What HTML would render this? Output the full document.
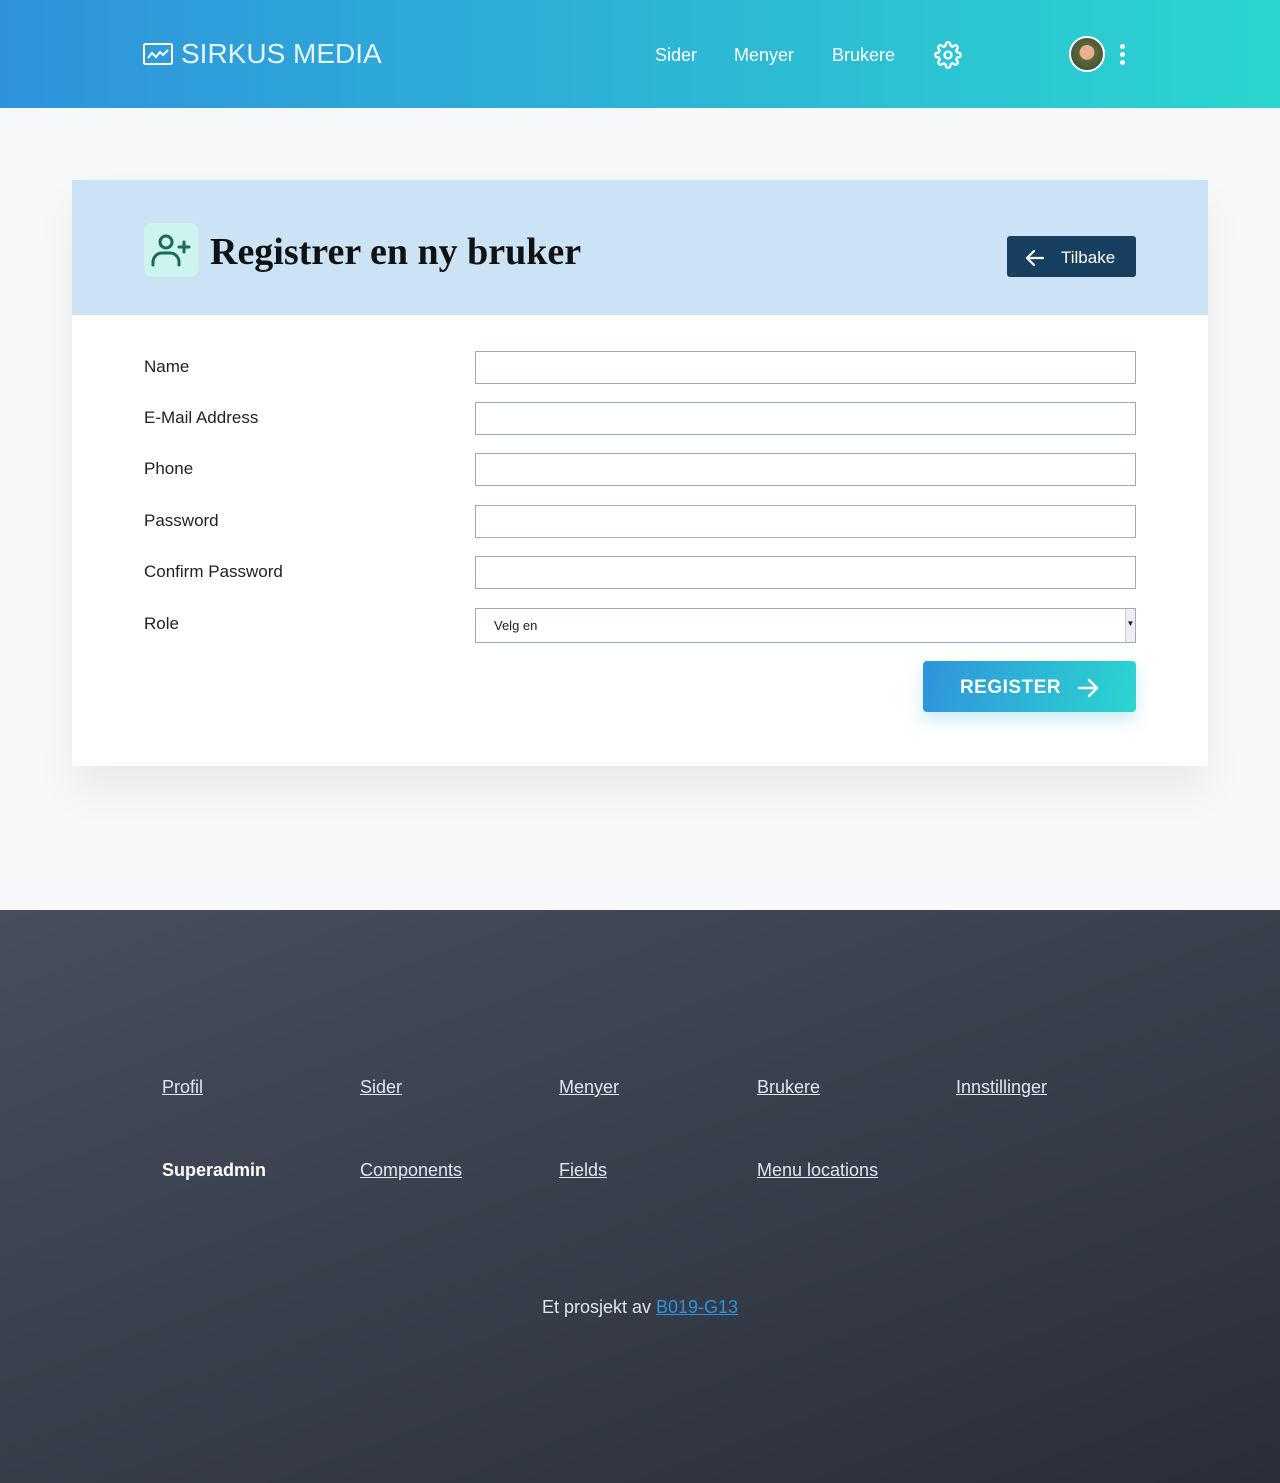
<!DOCTYPE html>
<html><head><meta charset="utf-8"><style>
*{box-sizing:border-box;margin:0;padding:0}
body{width:1280px;height:1483px;background:#f7f8fa;font-family:"Liberation Sans","DejaVu Sans",sans-serif;position:relative;overflow:hidden}
.hdr{position:absolute;left:0;top:0;width:1280px;height:108px;background:linear-gradient(90deg,#2e93dc,#2bd5cf)}
.logo{position:absolute;left:143px;top:38px;color:#e8f4fb;font-size:28px;font-weight:300;letter-spacing:0;display:flex;align-items:center;gap:8px}
.nav{position:absolute;top:45px;color:#fff;font-size:18px}
.card{position:absolute;left:72px;top:180px;width:1136px;height:586px;background:#fff;box-shadow:0 25px 40px rgba(0,0,0,0.06)}
.ch{height:135px;background:#cbe3f5;position:relative}
.icon{position:absolute;left:72px;top:43px;width:54px;height:54px;border-radius:8px;background:#cdf4ef}
h1{position:absolute;left:138px;top:50px;font-family:"Liberation Serif",serif;font-weight:bold;font-size:38px;color:#111}
.back{position:absolute;left:935px;top:56px;width:129px;height:41px;background:#173f5f;border-radius:3px;color:#fff;font-size:17px;display:flex;align-items:center;padding-left:18px;gap:16px;padding-top:2px}
.lbl{position:absolute;left:144px;font-size:17px;color:#222;margin-top:1px}
.inp{position:absolute;left:475px;width:661px;height:33px;border:1px solid #9aaac0;background:#fff}
.reg{position:absolute;left:923px;top:661px;width:213px;height:51px;border-radius:4px;background:linear-gradient(100deg,#2e93dc,#2bd5cf);color:#fff;font-weight:bold;font-size:19px;display:flex;align-items:center;justify-content:center;gap:16px;box-shadow:0 8px 16px rgba(43,180,210,0.25);letter-spacing:0.5px;padding-top:2px}
.ft{position:absolute;left:0;top:910px;width:1280px;height:573px;background:linear-gradient(160deg,#474e5c,#2a2e3a)}
.fl{position:absolute;color:#dfe6f0;font-size:18px;text-decoration:underline;margin-top:1px}
</style></head><body>
<div class="hdr">
 <div class="logo"><svg width="30" height="22" viewBox="0 0 30 22" fill="none" stroke="#fff" stroke-width="2"><rect x="1" y="1" width="28" height="20" rx="1.5"/><path d="M5 15l4-5 4 4 4-5 3 3 5-5"/></svg>SIRKUS MEDIA</div>
 <div class="nav" style="left:655px">Sider</div>
 <div class="nav" style="left:734px">Menyer</div>
 <div class="nav" style="left:832px">Brukere</div>
 <svg style="position:absolute;left:934px;top:41px" width="28" height="28" viewBox="0 0 24 24" fill="none" stroke="#fff" stroke-width="2"><circle cx="12" cy="12" r="3"/><path d="M19.4 15a1.65 1.65 0 0 0 .33 1.82l.06.06a2 2 0 1 1-2.830 2.83l-.06-.06a1.650 1.65 0 0 0-1.82-.33 1.65 1.65 0 0 0-1 1.51V21a2 2 0 1 1-4 0v-.09A1.65 1.65 0 0 0 9 19.4a1.65 1.65 0 0 0-1.82.33l-.06.06a2 2 0 1 1-2.83-2.83l.06-.06A1.65 1.65 0 0 0 4.68 15a1.65 1.65 0 0 0-1.51-1H3a2 2 0 1 1 0-4h.09A1.65 1.65 0 0 0 4.6 9a1.65 1.65 0 0 0-.33-1.82l-.06-.06a2 2 0 1 1 2.83-2.83l.06.06A1.65 1.65 0 0 0 9 4.68a1.65 1.65 0 0 0 1-1.51V3a2 2 0 1 1 4 0v.09a1.65 1.65 0 0 0 1 1.51 1.65 1.65 0 0 0 1.82-.33l.06-.06a2 2 0 1 1 2.83 2.83l-.06.06A1.65 1.65 0 0 0 19.4 9a1.65 1.65 0 0 0 1.51 1H21a2 2 0 1 1 0 4h-.09a1.65 1.65 0 0 0-1.51 1z"/></svg>
 <div style="position:absolute;left:1069px;top:36px;width:36px;height:36px;border-radius:50%;border:2px solid #fff;background:radial-gradient(circle at 50% 45%,#e8b090 0 30%,#5b6a3a 32%,#3a4530 100%)"></div>
 <div style="position:absolute;left:1120px;top:44px;width:5px;height:5px;border-radius:50%;background:#fff;box-shadow:0 8px 0 #fff,0 16px 0 #fff"></div>
</div>
<div class="card">
 <div class="ch">
  <div class="icon"><svg width="54" height="54" viewBox="0 0 54 54" fill="none" stroke="#1a6a5a" stroke-width="3" stroke-linecap="round"><circle cx="22" cy="19" r="6"/><path d="M9 42v-3a9 9 0 0 1 9-9h8a9 9 0 0 1 9 9v3"/><path d="M40 19v10M35 24h10"/></svg></div>
  <h1>Registrer en ny bruker</h1>
  <div class="back"><svg width="20" height="18" viewBox="0 0 20 18" fill="none" stroke="#fff" stroke-width="2.2" stroke-linecap="round" stroke-linejoin="round"><path d="M18 9H2M9 2L2 9l7 7"/></svg>Tilbake</div>
 </div>
</div>
<div class="lbl" style="top:356px">Name</div><div class="inp" style="top:351px"></div>
<div class="lbl" style="top:407px">E-Mail Address</div><div class="inp" style="top:402px"></div>
<div class="lbl" style="top:458px">Phone</div><div class="inp" style="top:453px"></div>
<div class="lbl" style="top:510px">Password</div><div class="inp" style="top:505px"></div>
<div class="lbl" style="top:561px">Confirm Password</div><div class="inp" style="top:556px"></div>
<div class="lbl" style="top:613px">Role</div>
<div class="inp" style="top:608px;height:35px;font-size:13px;padding:9px 0 0 18px;color:#222">Velg en<div style="position:absolute;right:0;top:0;width:10px;height:33px;background:#eee;border-left:1px solid #ccc;font-size:8px;padding-top:10px;text-align:center">▼</div></div>
<div class="reg">REGISTER <svg width="22" height="20" viewBox="0 0 22 20" fill="none" stroke="#fff" stroke-width="2.4" stroke-linecap="round" stroke-linejoin="round"><path d="M2 10h18M12 2l8 8-8 8"/></svg></div>
<div class="ft">
 <div class="fl" style="left:162px;top:166px">Profil</div>
 <div class="fl" style="left:360px;top:166px">Sider</div>
 <div class="fl" style="left:559px;top:166px">Menyer</div>
 <div class="fl" style="left:757px;top:166px">Brukere</div>
 <div class="fl" style="left:956px;top:166px">Innstillinger</div>
 <div class="fl" style="left:162px;top:249px;text-decoration:none;font-weight:bold;color:#fff">Superadmin</div>
 <div class="fl" style="left:360px;top:249px">Components</div>
 <div class="fl" style="left:559px;top:249px">Fields</div>
 <div class="fl" style="left:757px;top:249px">Menu locations</div>
 <div style="position:absolute;left:0;width:1280px;top:387px;text-align:center;color:#dfe6f0;font-size:18px">Et prosjekt av <span style="color:#2e93dc;text-decoration:underline">B019-G13</span></div>
</div>
</body></html>
